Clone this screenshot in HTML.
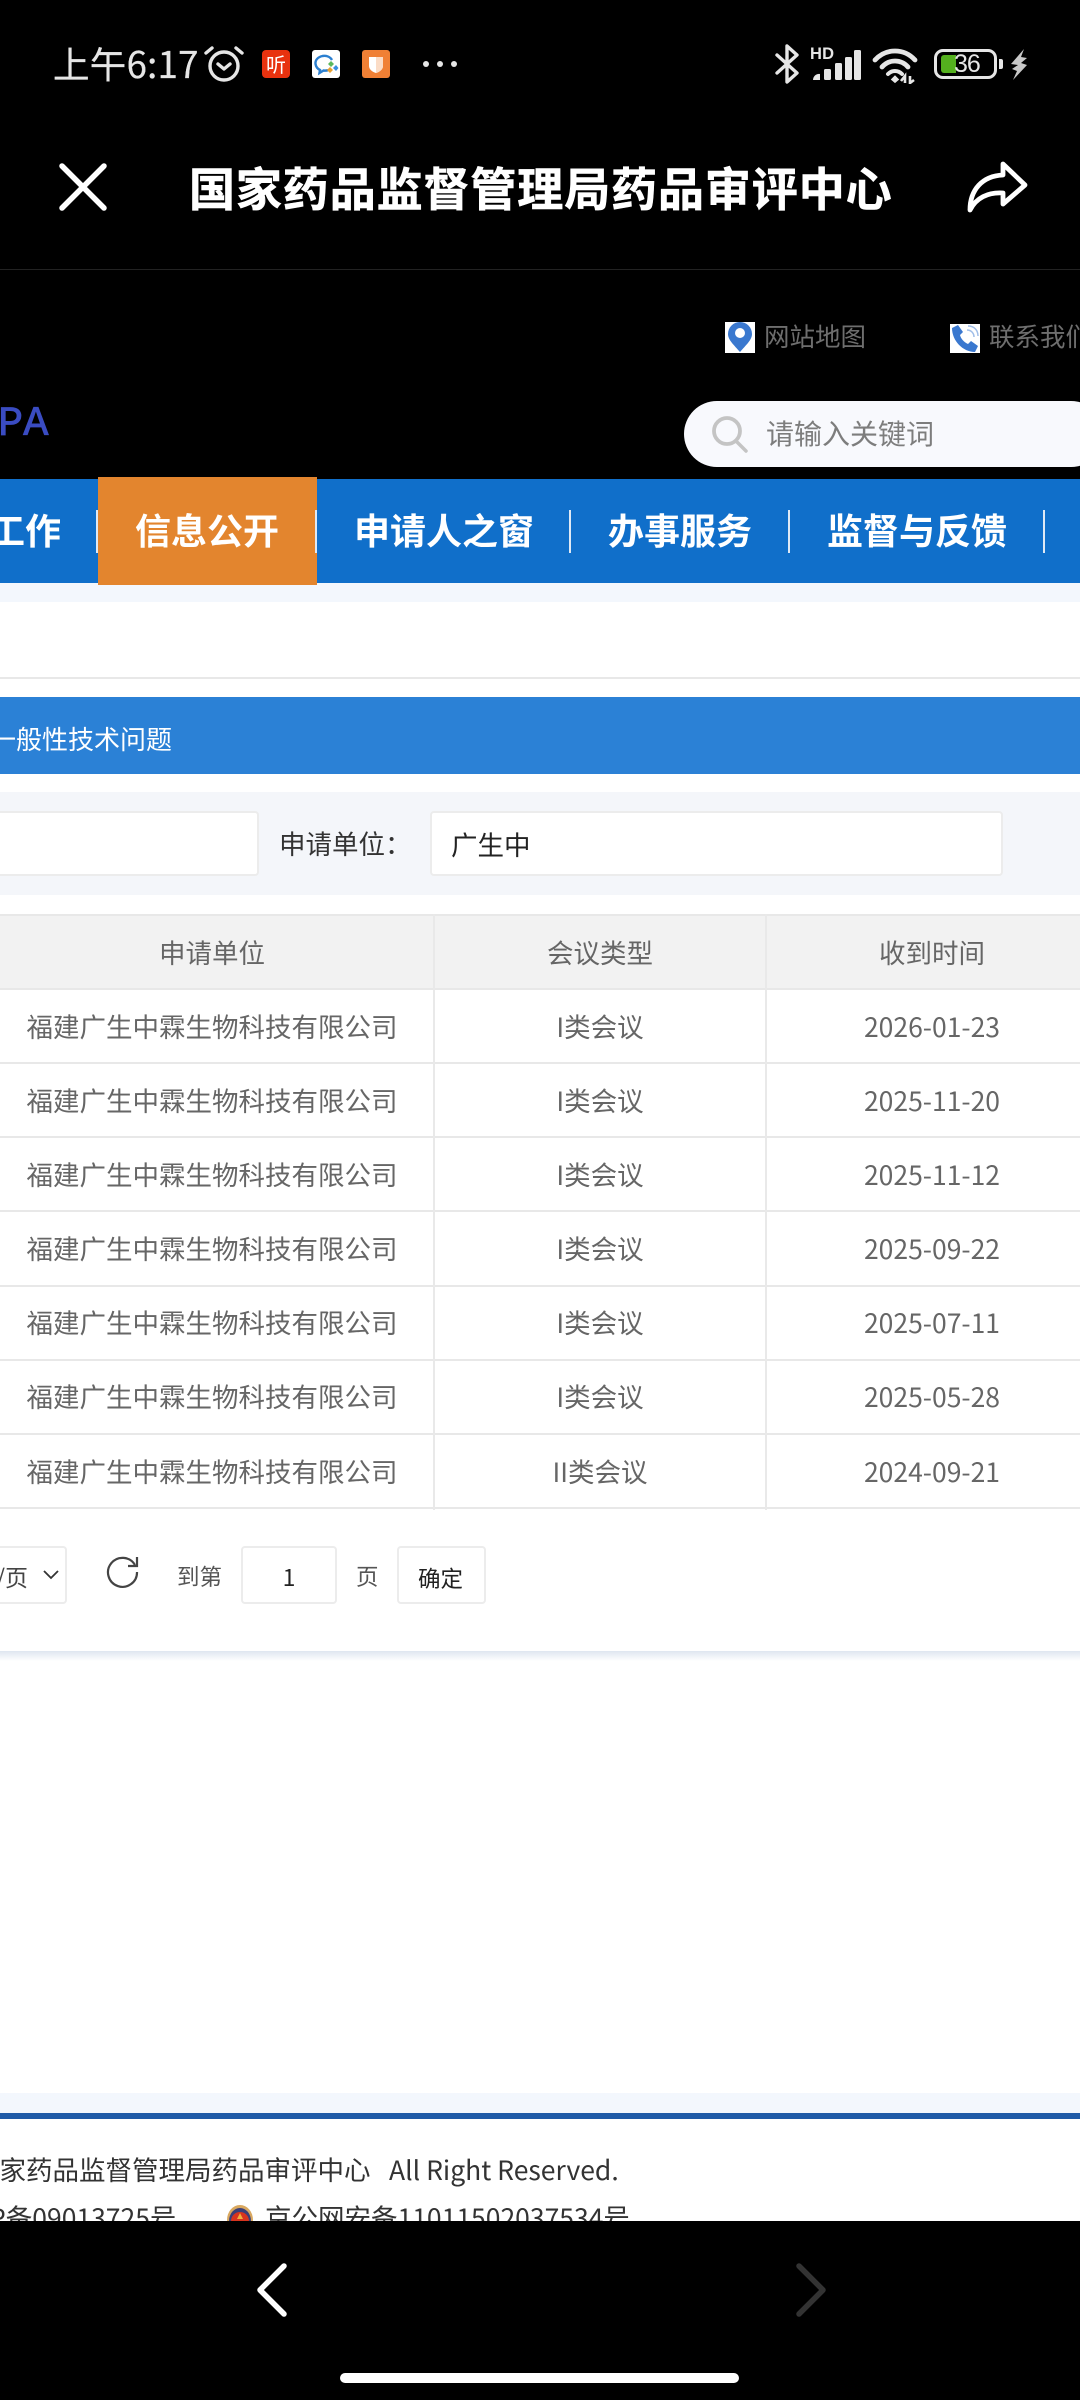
<!DOCTYPE html>
<html lang="zh"><head><meta charset="utf-8"><style>
html,body{margin:0;padding:0;background:#fff}
#p{position:relative;width:1080px;height:2400px;overflow:hidden;background:#fff;font-family:"Noto Sans CJK SC","Liberation Sans",sans-serif}
.a{position:absolute}
.t{position:absolute;white-space:nowrap;line-height:40px;height:40px}
.c{transform:translateX(-50%)}
.g{color:#666;font-size:26.5px}
.hl{position:absolute;left:0;width:1080px;height:2px;background:#e8e8e8}
.vl{position:absolute;width:2px;background:#e9e9e9;top:914px;height:596px}
.sep{position:absolute;width:2px;top:510px;height:43px;background:#dfe9f5}
.nav{position:absolute;top:508px;color:#fff;font-weight:700;font-size:36px;line-height:42px;white-space:nowrap;font-family:"Noto Sans CJK SC",sans-serif}
.box{position:absolute;box-sizing:border-box;background:#fff;border:2px solid #ececec;border-radius:4px}
</style></head><body><div id="p">

<!-- top black -->
<div class="a" style="left:0;top:0;width:1080px;height:479px;background:#000"></div>
<div class="a" style="left:0;top:269px;width:1080px;height:1px;background:#222"></div>

<!-- status bar -->
<div class="t" style="left:53px;top:43px;color:#e6e6e6;font-size:36.500px;letter-spacing:.3px;-webkit-text-stroke:.3px #e6e6e6">上午6:17</div>
<svg class="a" style="left:203px;top:44px" width="42" height="40" viewBox="0 0 42 40" fill="none" stroke="#e6e6e6" stroke-width="3.400" stroke-linecap="round" stroke-linejoin="round"><circle cx="21" cy="22" r="14"/><path d="M15 20l6 5 6-5"/><path d="M3 9l6-5M39 9l-6-5"/></svg>
<div class="a" style="left:262px;top:50px;width:28px;height:28px;border-radius:4px;background:#e8320f;color:#fff;font-size:20px;line-height:27px;text-align:center">听</div>
<svg class="a" style="left:312px;top:50px" width="28" height="28" viewBox="0 0 28 28"><rect width="28" height="28" rx="3" fill="#fff"/><path d="M20 10C18 6.500 14 5.500 10.500 6 6 7 3 10 3.500 14 4 17 6 19 8 20l-.5 3 4-2.500c1.500.2 3 .2 4.500-.3" fill="none" stroke="#2b7fd0" stroke-width="2.400"/><path d="M19 11l3 3-3 3-3-3z" fill="#5cb85c"/><path d="M24 15l2.500 3-2.500 3-3-3z" fill="#3a8fe0"/><path d="M18 17l3 3-3 3-3-3z" fill="#e8a030"/></svg>
<svg class="a" style="left:362px;top:50px" width="28" height="28" viewBox="0 0 28 28"><rect width="28" height="28" rx="3" fill="#f08035"/><path d="M7 7h14v9c0 3-3 6-7 7-4-1-7-4-7-7z" fill="#fff"/><path d="M14 7h7v9c0 3-3 6-7 7z" fill="#fbdcc6"/></svg>
<svg class="a" style="left:420px;top:58px" width="40" height="12"><circle cx="6" cy="6" r="3" fill="#e6e6e6"/><circle cx="20" cy="6" r="3" fill="#e6e6e6"/><circle cx="34" cy="6" r="3" fill="#e6e6e6"/></svg>

<svg class="a" style="left:772px;top:43px" width="30" height="42" viewBox="0 0 30 42" fill="none" stroke="#e6e6e6" stroke-width="3.400" stroke-linejoin="round" stroke-linecap="round"><path d="M5 12l20 18-10 9V3l10 9L5 30"/></svg>
<div class="a" style="left:810px;top:46px;color:#e6e6e6;font:700 16.500px/16px 'Liberation Sans',sans-serif;letter-spacing:.2px">HD</div>
<svg class="a" style="left:812px;top:48px" width="50" height="34" viewBox="0 0 50 34" fill="#e6e6e6"><path d="M1 32a6 6 0 0 1 7-6v6z"/><rect x="12" y="21" width="7" height="11" rx="1.500"/><rect x="23" y="15" width="7" height="17" rx="1.500"/><rect x="33" y="9" width="7" height="23" rx="1.500"/><rect x="42" y="2" width="7" height="30" rx="1.500"/></svg>
<svg class="a" style="left:871px;top:46px" width="50" height="38" viewBox="0 0 50 38" fill="none" stroke="#e6e6e6" stroke-width="4.800" stroke-linecap="round"><path d="M4 14C15 2 33 2 44 14"/><path d="M11 21c7-8 19-8 26 0"/><path d="M17 28c4-4 10-4 14 0" stroke-width="4"/><path d="M24 30l3.500 3.500-3.500 3-3.500-3z" fill="#e6e6e6" stroke-width="1"/><path d="M34 37v-7l-4 5M39 30v7l4-3" stroke-width="2.600" stroke-linecap="butt"/></svg>
<div class="a" style="left:934px;top:49px;width:63px;height:30px;box-sizing:border-box;border:3px solid #e6e6e6;border-radius:9px"></div>
<div class="a" style="left:941px;top:55px;width:15px;height:18px;background:#54b01e;border-radius:3px 0 0 3px"></div>
<div class="t" style="left:954px;top:44px;color:#e6e6e6;font-size:25px;letter-spacing:-1px;font-family:'Liberation Sans',sans-serif">36</div>
<div class="a" style="left:999px;top:59px;width:4px;height:10px;background:#e6e6e6;border-radius:0 2px 2px 0"></div>
<svg class="a" style="left:1010px;top:49px" width="18" height="31" viewBox="0 0 18 31" fill="#c8c8c8"><path d="M14 0L1 15l7 1-6 4 5 2-4 9 14-15-6-2 6-5-6-1z"/></svg>

<!-- title bar -->
<svg class="a" style="left:58px;top:162px" width="50" height="50" viewBox="0 0 50 50" fill="none" stroke="#fff" stroke-width="5.500" stroke-linecap="round"><path d="M4 4l42 42M46 4L4 46"/></svg>
<div class="a" style="left:189px;top:161px;color:#fff;font-weight:700;font-size:46px;line-height:52px;letter-spacing:.9px;white-space:nowrap;-webkit-text-stroke:.6px #fff">国家药品监督管理局药品审评中心</div>
<svg class="a" style="left:966px;top:160px" width="62" height="54" viewBox="0 0 62 54" fill="none" stroke="#fff" stroke-width="4.800" stroke-linejoin="round" stroke-linecap="round"><path d="M37 4l22 21-22 19V33C22 32 10 38 4 50 4 30 16 16 37 15z"/></svg>

<!-- site header -->
<div class="a" style="left:725px;top:322px;width:30px;height:31px;background:#fff"></div>
<svg class="a" style="left:725px;top:322px" width="30" height="31" viewBox="0 0 30 31"><path d="M15 30C9 23 3 18 3 12a12 12 0 0 1 24 0c0 6-6 11-12 18z" fill="#3a78cf"/><circle cx="15" cy="11" r="5" fill="#fff"/></svg>
<div class="t" style="left:764px;top:316px;color:#6e6e6e;font-size:25.500px">网站地图</div>
<div class="a" style="left:950px;top:324px;width:30px;height:29px;background:#fff"></div>
<svg class="a" style="left:950px;top:324px" width="30" height="29" viewBox="0 0 30 29"><path d="M2 4l6-3 5 7-3 3c1 4 4 7 8 9l3-3 7 5-3 6c-12 0-23-11-23-24z" fill="#3a78cf"/><path d="M17 6c4 0 7 3 7 7M18 2c6 0 10 4 10 10" fill="none" stroke="#9fbde8" stroke-width="1.500"/></svg>
<div class="t" style="left:989px;top:316px;color:#6e6e6e;font-size:25.500px">联系我们</div>

<div class="a" style="left:-2px;top:403px;color:#3a4cc2;font:400 42px/42px 'Liberation Mono','Liberation Sans',sans-serif;white-space:nowrap;-webkit-text-stroke:.8px #3a4cc2">PA</div>

<div class="a" style="left:684px;top:401px;width:420px;height:66px;border-radius:33px;background:#f8f9fd"></div>
<svg class="a" style="left:710px;top:414px" width="42" height="40" viewBox="0 0 42 40" fill="none" stroke="#c4c4c4"><circle cx="17" cy="17" r="13" stroke-width="3.800"/><path d="M27 28l9 9" stroke-width="3.500" stroke-linecap="round"/></svg>
<div class="t" style="left:766px;top:413px;color:#7d7d7d;font-size:28px">请输入关键词</div>

<!-- nav -->
<div class="a" style="left:0;top:479px;width:1080px;height:104px;background:#106fca"></div>
<div class="a" style="left:0;top:583px;width:1080px;height:19px;background:#f3f7fd"></div>
<div class="a" style="left:98px;top:477px;width:219px;height:108px;background:#e3852e"></div>
<div class="sep" style="left:96px"></div><div class="sep" style="left:315px"></div><div class="sep" style="left:569px"></div><div class="sep" style="left:788px"></div><div class="sep" style="left:1043px"></div>
<div class="nav" style="left:-11px">工作</div>
<div class="nav" style="left:135px">信息公开</div>
<div class="nav" style="left:354px">申请人之窗</div>
<div class="nav" style="left:608px">办事服务</div>
<div class="nav" style="left:827px">监督与反馈</div>

<div class="hl" style="top:677px"></div>

<!-- section -->
<div class="a" style="left:0;top:697px;width:1080px;height:77px;background:#2b81d6"></div>
<div class="t" style="left:-10px;top:719px;color:#fff;font-size:26px">一般性技术问题</div>

<div class="a" style="left:0;top:792px;width:1080px;height:103px;background:#f4f6fa"></div>
<div class="box" style="left:-10px;top:811px;width:269px;height:65px"></div>
<div class="t" style="left:279px;top:823px;color:#333;font-size:26.500px">申请单位：</div>
<div class="box" style="left:430px;top:811px;width:573px;height:65px"></div>
<div class="t" style="left:451px;top:824px;color:#222;font-size:26.500px">广生中</div>

<!-- table -->
<div class="a" style="left:0;top:914px;width:1080px;height:75px;background:#f2f2f2"></div>
<div class="hl" style="top:914px"></div><div class="hl" style="top:988px"></div><div class="hl" style="top:1062px"></div><div class="hl" style="top:1136px"></div><div class="hl" style="top:1210px"></div><div class="hl" style="top:1285px"></div><div class="hl" style="top:1359px"></div><div class="hl" style="top:1433px"></div><div class="hl" style="top:1507px"></div>
<div class="vl" style="left:433px"></div><div class="vl" style="left:765px"></div>

<div class="t g c" style="left:212px;top:932px">申请单位</div><div class="t g c" style="left:600px;top:932px">会议类型</div><div class="t g c" style="left:932px;top:932px">收到时间</div>

<div class="t g c" style="left:212px;top:1006px">福建广生中霖生物科技有限公司</div><div class="t g c" style="left:600px;top:1006px">I类会议</div><div class="t g c" style="left:932px;top:1006px">2026-01-23</div>
<div class="t g c" style="left:212px;top:1080px">福建广生中霖生物科技有限公司</div><div class="t g c" style="left:600px;top:1080px">I类会议</div><div class="t g c" style="left:932px;top:1080px">2025-11-20</div>
<div class="t g c" style="left:212px;top:1154px">福建广生中霖生物科技有限公司</div><div class="t g c" style="left:600px;top:1154px">I类会议</div><div class="t g c" style="left:932px;top:1154px">2025-11-12</div>
<div class="t g c" style="left:212px;top:1228px">福建广生中霖生物科技有限公司</div><div class="t g c" style="left:600px;top:1228px">I类会议</div><div class="t g c" style="left:932px;top:1228px">2025-09-22</div>
<div class="t g c" style="left:212px;top:1302px">福建广生中霖生物科技有限公司</div><div class="t g c" style="left:600px;top:1302px">I类会议</div><div class="t g c" style="left:932px;top:1302px">2025-07-11</div>
<div class="t g c" style="left:212px;top:1376px">福建广生中霖生物科技有限公司</div><div class="t g c" style="left:600px;top:1376px">I类会议</div><div class="t g c" style="left:932px;top:1376px">2025-05-28</div>
<div class="t g c" style="left:212px;top:1451px">福建广生中霖生物科技有限公司</div><div class="t g c" style="left:600px;top:1451px">II类会议</div><div class="t g c" style="left:932px;top:1451px">2024-09-21</div>

<!-- pagination -->
<div class="box" style="left:-20px;top:1546px;width:87px;height:58px"></div>
<div class="t" style="left:-4px;top:1556px;color:#444;font-size:23px">/页</div>
<svg class="a" style="left:42px;top:1568px" width="18" height="14" viewBox="0 0 18 14" fill="none" stroke="#333" stroke-width="1.800"><path d="M2 3l7 7 7-7"/></svg>
<svg class="a" style="left:104px;top:1554px" width="36" height="36" viewBox="0 0 36 36" fill="none" stroke="#444" stroke-width="2.200"><path d="M31 11A14.500 14.500 0 1 0 33 18"/><path d="M33 3v9H24"/></svg>
<div class="t" style="left:177px;top:1556px;color:#555;font-size:22.500px">到第</div>
<div class="box" style="left:241px;top:1546px;width:96px;height:58px"></div>
<div class="t c" style="left:289px;top:1556px;color:#222;font-size:23px">1</div>
<div class="t" style="left:356px;top:1556px;color:#555;font-size:22.500px">页</div>
<div class="box" style="left:397px;top:1546px;width:89px;height:58px"></div>
<div class="t" style="left:418px;top:1558px;color:#222;font-size:22.500px">确定</div>
<div class="a" style="left:0;top:1651px;width:1080px;height:10px;background:linear-gradient(#dfe6f0,#fff)"></div>

<!-- footer -->
<div class="a" style="left:0;top:2093px;width:1080px;height:20px;background:#f3f7fd"></div>
<div class="a" style="left:0;top:2113px;width:1080px;height:6px;background:#1f5ba8"></div>
<div class="t" style="left:-27px;top:2149px;color:#333;font-size:26.500px">国家药品监督管理局药品审评中心</div>
<div class="t" style="left:389px;top:2149px;color:#333;font-size:26.500px">All Right Reserved.</div>
<div class="t" style="left:-11px;top:2197px;color:#333;font-size:26.500px">P备09013725号</div>
<svg class="a" style="left:226px;top:2204px" width="28" height="32" viewBox="0 0 28 32"><ellipse cx="14" cy="16" rx="13" ry="15" fill="#d9a860"/><ellipse cx="14" cy="17" rx="11" ry="13" fill="#3a3f78"/><circle cx="14" cy="17" r="9" fill="#d8341e"/><path d="M14 9l3 6h-6z" fill="#f0b040"/></svg>
<div class="t" style="left:265px;top:2197px;color:#333;font-size:26.500px">京公网安备11011502037534号</div>

<!-- bottom -->
<div class="a" style="left:0;top:2221px;width:1080px;height:179px;background:#000"></div>
<svg class="a" style="left:250px;top:2258px" width="580" height="64" fill="none" stroke-width="5.500" stroke-linecap="round" stroke-linejoin="round"><path d="M34 8L10 32l24 24" stroke="#fff"/><path d="M549 8l24 24-24 24" stroke="#333"/></svg>
<div class="a" style="left:340px;top:2373px;width:399px;height:10px;background:#fff;border-radius:5px"></div>
</div></body></html>
